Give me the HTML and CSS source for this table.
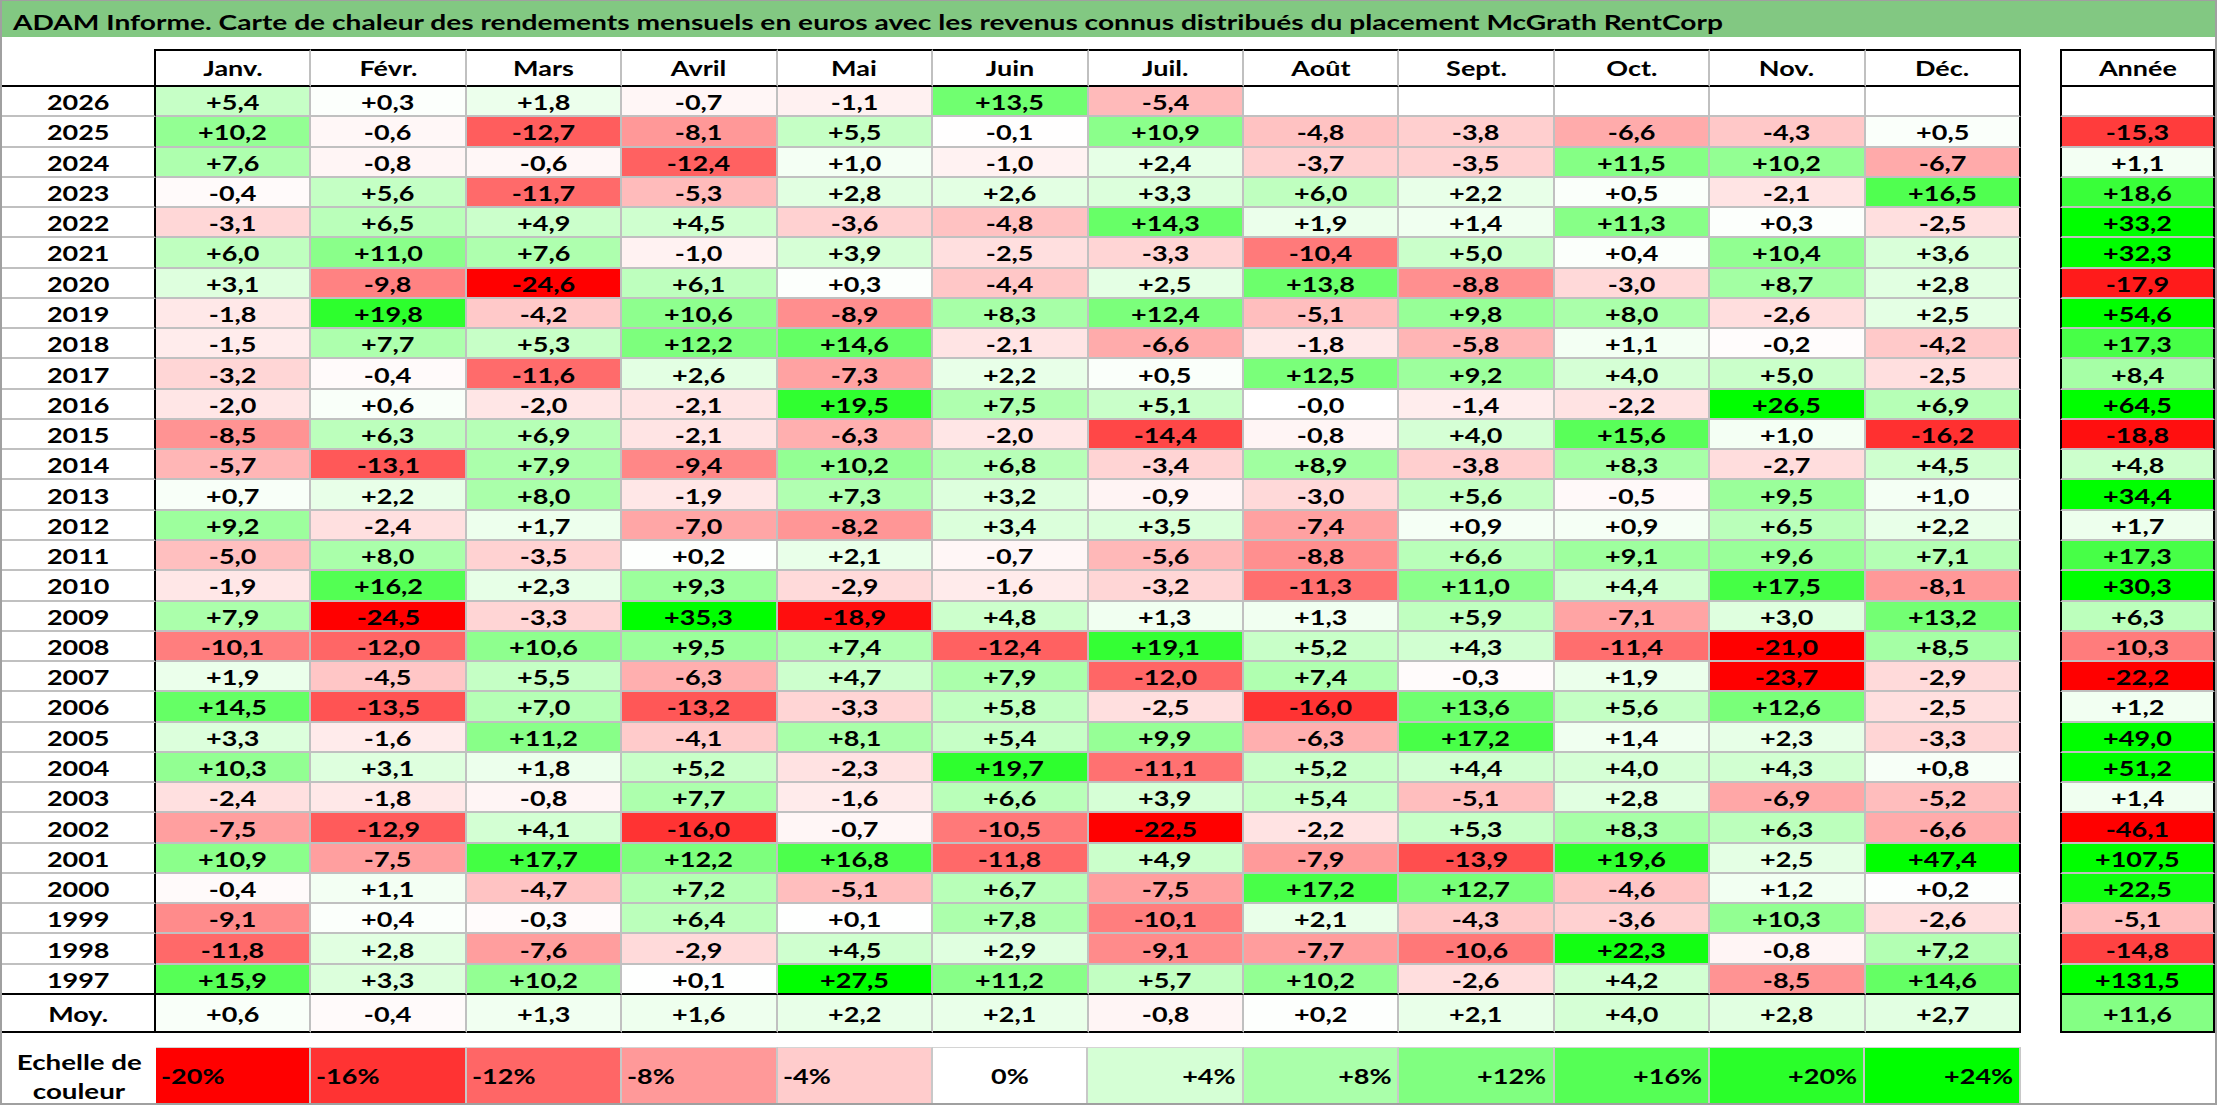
FILE: index.html
```html
<!DOCTYPE html>
<html lang="fr">
<head>
<meta charset="utf-8">
<title>ADAM Informe - McGrath RentCorp</title>
<link rel="stylesheet" href="styles.css">
</head>
<body>
<div class="frame">
  <div class="title"><span class="t">ADAM Informe. Carte de chaleur des rendements mensuels en euros avec les revenus connus distribués du placement McGrath RentCorp</span></div>
  <div class="tables">
    <div class="main" id="main"></div>
    <div class="annual" id="annual"></div>
  </div>
  <div class="legend" id="legend">
    <div class="lab"><span class="t">Echelle de</span><span class="t">couleur</span></div>
  </div>
</div>
<script src="app.js"></script>
</body>
</html>
```
FILE: styles.css
```css
* { box-sizing: border-box; }
html, body { margin: 0; padding: 0; background: #ffffff; }
body {
  font-family: Lato, "Open Sans", "Liberation Sans", sans-serif;
  font-weight: 700;
  color: #000000;
}
.frame {
  width: 2217px;
  height: 1105px;
  border-top: 1px solid #a0a0a0;
  border-left: 2px solid #a0a0a0;
  border-right: 2px solid #a0a0a0;
  border-bottom: 2px solid #a0a0a0;
  display: flex;
  flex-direction: column;
  overflow: hidden;
}
.t {
  display: inline-block;
  transform: scaleX(1.35);
  white-space: nowrap;
}
.title {
  height: 36px;
  flex: none;
  background: #82c882;
  display: flex;
  align-items: center;
  padding: 4px 0 0 11px;
  font-size: 21px;
  white-space: nowrap;
}
.title .t { transform-origin: left center; transform: scaleX(1.34); }
.tables {
  display: flex;
  gap: 39px;
  margin: 12px 0 0 -2px;
  flex: none;
}
.main {
  width: 2021px;
  display: grid;
  grid-template-columns: 156px repeat(12, 1fr);
  grid-template-rows: 38px repeat(30, 30.28px) 37.6px;
}
.annual {
  width: 155px;
  display: grid;
  grid-template-columns: 1fr;
  grid-template-rows: 38px repeat(30, 30.28px) 37.6px;
}
.c {
  display: flex;
  align-items: center;
  justify-content: center;
  min-width: 0;
  padding-top: 2px;
  font-size: 20px;
  white-space: nowrap;
  border-right: 2px solid #c0c0c0;
  border-bottom: 2px solid #c0c0c0;
}
.h {
  padding-top: 0;
  border-top: 2px solid #000000;
  border-bottom: 2px solid #000000;
}
.hy {
  border-top: 0;
  border-left: 2px solid #a0a0a0;
  border-right: 2px solid #000000;
}
.yr {
  border-left: 2px solid #000000;
  border-right: 2px solid #000000;
}
.last { border-right: 2px solid #000000; }
.end, .moy { border-bottom: 2px solid #000000; }
.a {
  border-left: 2px solid #000000;
  border-right: 2px solid #000000;
}
.legend {
  margin-top: 14px;
  height: 56px;
  flex: none;
  display: grid;
  grid-template-columns: 154px repeat(12, 155.42px);
}
.lab {
  display: flex;
  flex-direction: column;
  align-items: center;
  justify-content: center;
  font-size: 21px;
  line-height: 29px;
}
.lab .t { transform: scaleX(1.32); }
.lc {
  display: flex;
  align-items: center;
  font-size: 20px;
  white-space: nowrap;
  border-right: 2px solid #c8c8c8;
  border-top: 1px solid #d4d4d4;
}
.lc.l { justify-content: flex-start; padding-left: 5px; }
.lc.l .t { transform-origin: left center; }
.lc.m { justify-content: center; }
.lc.r { justify-content: flex-end; padding-right: 6px; }
.lc.r .t { transform-origin: right center; }
```
FILE: app.js
```js
(function () {
  var M = ["Janv.", "Févr.", "Mars", "Avril", "Mai", "Juin", "Juil.", "Août", "Sept.", "Oct.", "Nov.", "Déc."];
  var D = [
    "2026 +5,4 +0,3 +1,8 -0,7 -1,1 +13,5 -5,4 . . . . . .",
    "2025 +10,2 -0,6 -12,7 -8,1 +5,5 -0,1 +10,9 -4,8 -3,8 -6,6 -4,3 +0,5 -15,3",
    "2024 +7,6 -0,8 -0,6 -12,4 +1,0 -1,0 +2,4 -3,7 -3,5 +11,5 +10,2 -6,7 +1,1",
    "2023 -0,4 +5,6 -11,7 -5,3 +2,8 +2,6 +3,3 +6,0 +2,2 +0,5 -2,1 +16,5 +18,6",
    "2022 -3,1 +6,5 +4,9 +4,5 -3,6 -4,8 +14,3 +1,9 +1,4 +11,3 +0,3 -2,5 +33,2",
    "2021 +6,0 +11,0 +7,6 -1,0 +3,9 -2,5 -3,3 -10,4 +5,0 +0,4 +10,4 +3,6 +32,3",
    "2020 +3,1 -9,8 -24,6 +6,1 +0,3 -4,4 +2,5 +13,8 -8,8 -3,0 +8,7 +2,8 -17,9",
    "2019 -1,8 +19,8 -4,2 +10,6 -8,9 +8,3 +12,4 -5,1 +9,8 +8,0 -2,6 +2,5 +54,6",
    "2018 -1,5 +7,7 +5,3 +12,2 +14,6 -2,1 -6,6 -1,8 -5,8 +1,1 -0,2 -4,2 +17,3",
    "2017 -3,2 -0,4 -11,6 +2,6 -7,3 +2,2 +0,5 +12,5 +9,2 +4,0 +5,0 -2,5 +8,4",
    "2016 -2,0 +0,6 -2,0 -2,1 +19,5 +7,5 +5,1 -0,0 -1,4 -2,2 +26,5 +6,9 +64,5",
    "2015 -8,5 +6,3 +6,9 -2,1 -6,3 -2,0 -14,4 -0,8 +4,0 +15,6 +1,0 -16,2 -18,8",
    "2014 -5,7 -13,1 +7,9 -9,4 +10,2 +6,8 -3,4 +8,9 -3,8 +8,3 -2,7 +4,5 +4,8",
    "2013 +0,7 +2,2 +8,0 -1,9 +7,3 +3,2 -0,9 -3,0 +5,6 -0,5 +9,5 +1,0 +34,4",
    "2012 +9,2 -2,4 +1,7 -7,0 -8,2 +3,4 +3,5 -7,4 +0,9 +0,9 +6,5 +2,2 +1,7",
    "2011 -5,0 +8,0 -3,5 +0,2 +2,1 -0,7 -5,6 -8,8 +6,6 +9,1 +9,6 +7,1 +17,3",
    "2010 -1,9 +16,2 +2,3 +9,3 -2,9 -1,6 -3,2 -11,3 +11,0 +4,4 +17,5 -8,1 +30,3",
    "2009 +7,9 -24,5 -3,3 +35,3 -18,9 +4,8 +1,3 +1,3 +5,9 -7,1 +3,0 +13,2 +6,3",
    "2008 -10,1 -12,0 +10,6 +9,5 +7,4 -12,4 +19,1 +5,2 +4,3 -11,4 -21,0 +8,5 -10,3",
    "2007 +1,9 -4,5 +5,5 -6,3 +4,7 +7,9 -12,0 +7,4 -0,3 +1,9 -23,7 -2,9 -22,2",
    "2006 +14,5 -13,5 +7,0 -13,2 -3,3 +5,8 -2,5 -16,0 +13,6 +5,6 +12,6 -2,5 +1,2",
    "2005 +3,3 -1,6 +11,2 -4,1 +8,1 +5,4 +9,9 -6,3 +17,2 +1,4 +2,3 -3,3 +49,0",
    "2004 +10,3 +3,1 +1,8 +5,2 -2,3 +19,7 -11,1 +5,2 +4,4 +4,0 +4,3 +0,8 +51,2",
    "2003 -2,4 -1,8 -0,8 +7,7 -1,6 +6,6 +3,9 +5,4 -5,1 +2,8 -6,9 -5,2 +1,4",
    "2002 -7,5 -12,9 +4,1 -16,0 -0,7 -10,5 -22,5 -2,2 +5,3 +8,3 +6,3 -6,6 -46,1",
    "2001 +10,9 -7,5 +17,7 +12,2 +16,8 -11,8 +4,9 -7,9 -13,9 +19,6 +2,5 +47,4 +107,5",
    "2000 -0,4 +1,1 -4,7 +7,2 -5,1 +6,7 -7,5 +17,2 +12,7 -4,6 +1,2 +0,2 +22,5",
    "1999 -9,1 +0,4 -0,3 +6,4 +0,1 +7,8 -10,1 +2,1 -4,3 -3,6 +10,3 -2,6 -5,1",
    "1998 -11,8 +2,8 -7,6 -2,9 +4,5 +2,9 -9,1 -7,7 -10,6 +22,3 -0,8 +7,2 -14,8",
    "1997 +15,9 +3,3 +10,2 +0,1 +27,5 +11,2 +5,7 +10,2 -2,6 +4,2 -8,5 +14,6 +131,5",
    "Moy. +0,6 -0,4 +1,3 +1,6 +2,2 +2,1 -0,8 +0,2 +2,1 +4,0 +2,8 +2,7 +11,6"
  ];

  function col(s) {
    if (s === "." || s === "") return "#ffffff";
    var v = parseFloat(s.replace(",", "."));
    var t, c;
    if (v > 0) {
      t = Math.min(v / 24, 1);
      c = Math.round(255 * (1 - t));
      return "rgb(" + c + ",255," + c + ")";
    }
    if (v < 0) {
      t = Math.min(-v / 20, 1);
      c = Math.round(255 * (1 - t));
      return "rgb(255," + c + "," + c + ")";
    }
    return "#ffffff";
  }

  function cell(parent, cls, text, bg) {
    var d = document.createElement("div");
    d.className = cls;
    if (bg) d.style.background = bg;
    if (text) {
      var s = document.createElement("span");
      s.className = "t";
      s.textContent = text;
      d.appendChild(s);
    }
    parent.appendChild(d);
    return d;
  }

  var main = document.getElementById("main");
  var ann = document.getElementById("annual");
  var leg = document.getElementById("legend");

  cell(main, "c h hy", "");
  M.forEach(function (m, i) { cell(main, "c h" + (i === 11 ? " last" : ""), m); });
  cell(ann, "c h a", "Année");

  D.forEach(function (line, r) {
    var p = line.split(" ");
    var rc = r === D.length - 1 ? " moy" : (r === D.length - 2 ? " end" : "");
    cell(main, "c yr" + rc, p[0]);
    for (var i = 1; i <= 12; i++) {
      var s = p[i];
      cell(main, "c v" + rc + (i === 12 ? " last" : ""), s === "." ? "" : s, col(s));
    }
    var a = p[13];
    cell(ann, "c a" + rc, a === "." ? "" : a, col(a));
  });

  [-20, -16, -12, -8, -4, 0, 4, 8, 12, 16, 20, 24].forEach(function (v) {
    var txt = (v > 0 ? "+" : "") + v + "%";
    var al = v < 0 ? " l" : (v > 0 ? " r" : " m");
    cell(leg, "lc" + al, txt, col(String(v)));
  });
})();
```
